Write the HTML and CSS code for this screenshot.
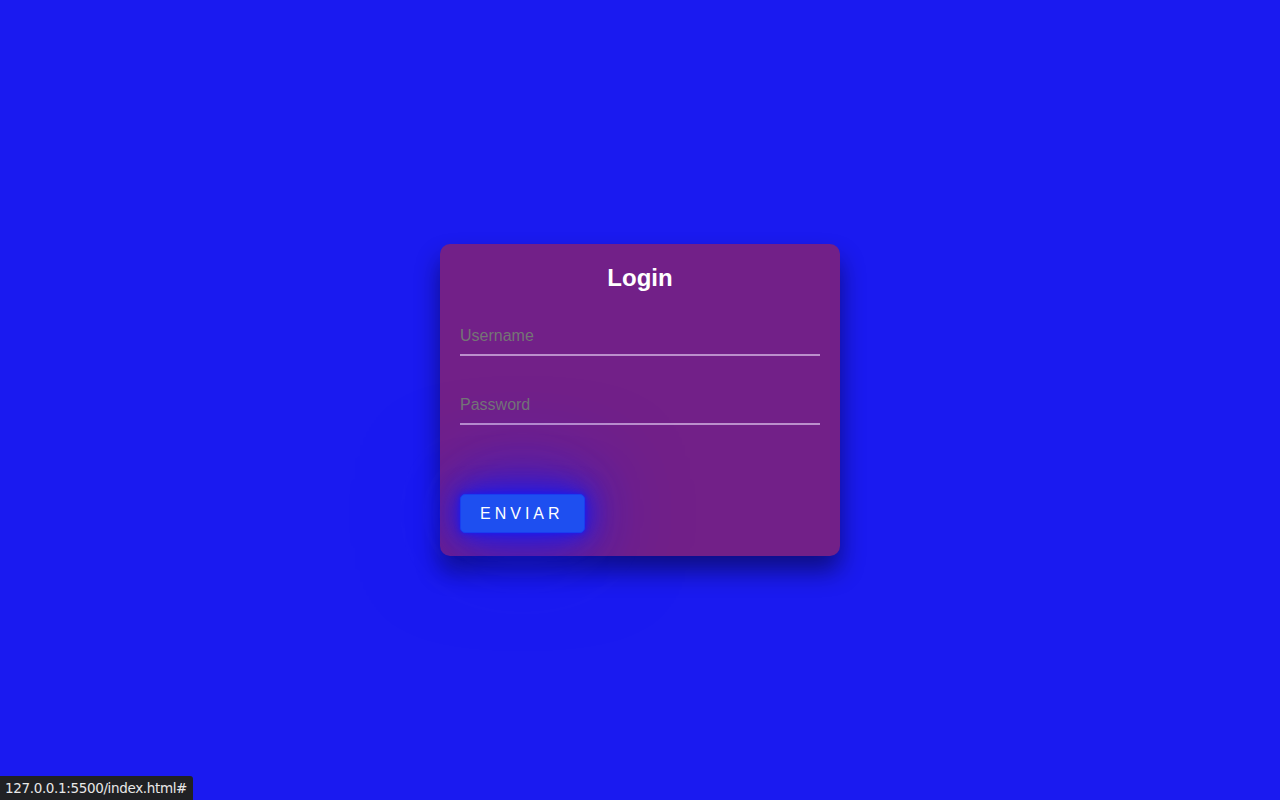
FILE: index.html
```html
<!DOCTYPE html>
<html lang="pt">
<head>
<meta charset="utf-8">
<title>Login</title>
<link rel="stylesheet" href="styles.css">
</head>
<body>
<div class="page">
  <form class="card">
    <h2 class="title">Login</h2>
    <div class="field"><input class="input" type="text" placeholder="Username"></div>
    <div class="field"><input class="input" type="password" placeholder="Password"></div>
    <a class="btn" href="#">ENVIAR</a>
  </form>
</div>
<div class="status">127.0.0.1:5500/index.html#</div>
</body>
</html>
```

FILE: styles.css
```css
* { box-sizing: border-box; }
html, body { margin: 0; height: 100%; }
body {
  background: #1a1af0;
  font-family: "Liberation Sans", Arial, sans-serif;
}
.page {
  height: 100vh;
  display: flex;
  align-items: center;
  justify-content: center;
}
.card {
  width: 400px;
  padding: 20px 20px 23px;
  background: #722088;
  border-radius: 10px;
  box-shadow: 0 15px 25px rgba(0, 0, 0, 0.45);
}
.title {
  margin: 0 0 24px;
  font-size: 24px;
  line-height: 28px;
  font-weight: bold;
  color: #fff;
  text-align: center;
}
.field { margin-bottom: 29px; }
.input {
  display: block;
  width: 100%;
  padding: 11px 0 9px;
  font-family: "Liberation Sans", Arial, sans-serif;
  font-size: 16px;
  line-height: 18px;
  color: #fff;
  background: transparent;
  border: none;
  border-bottom: 2px solid #bb8fcc;
  outline: none;
}
.input::placeholder { color: #757575; }
.btn {
  display: inline-block;
  margin-top: 40px;
  padding: 10px 20px 10px 19px;
  font-size: 16px;
  line-height: 17px;
  letter-spacing: 4px;
  color: #fff;
  text-decoration: none;
  background: #1e4ff0;
  border: 1px solid #1a3ef0;
  border-radius: 5px;
  box-shadow: 0 0 5px #1a1af0, 0 0 25px #1a1af0, 0 0 50px #1a1af0, 0 0 100px #1a1af0;
}
.status {
  position: fixed;
  left: 0;
  bottom: 0;
  height: 24px;
  padding: 0 6px 0 5px;
  background: #202124;
  color: #e8e8e8;
  font-family: "DejaVu Sans", sans-serif;
  font-size: 13.5px;
  line-height: 24px;
  border-top-right-radius: 3px;
  letter-spacing: -0.35px;
}
```
